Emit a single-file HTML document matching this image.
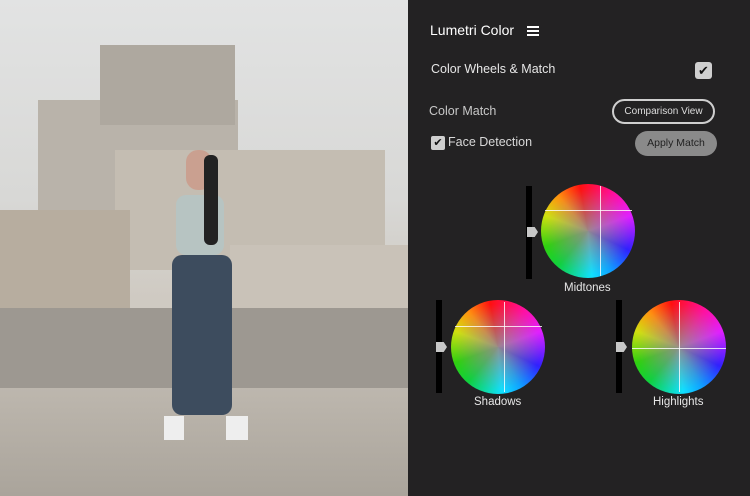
<!DOCTYPE html>
<html><head><style>
*{margin:0;padding:0;box-sizing:border-box}
body{width:750px;height:496px;overflow:hidden;background:#232223;font-family:"Liberation Sans",sans-serif;position:relative}
.a{position:absolute}
.photo{left:0;top:0;width:408px;height:496px;background:linear-gradient(#e2e3e3 0,#d8d8d6 40%,#cfcac2 60%);overflow:hidden}
.t{color:#e6e6e6;position:absolute;white-space:nowrap}
.wheel{position:absolute;width:94px;height:94px;border-radius:50%;background:radial-gradient(circle,rgba(150,140,140,.95) 0,rgba(150,140,140,.5) 30%,rgba(150,140,140,0) 65%),conic-gradient(from -10deg,#ff1010,#ff10a0 45deg,#e020ff 80deg,#3020ff 125deg,#10a0ff 160deg,#10e0ff 185deg,#10d040 230deg,#30d010 260deg,#d0e010 300deg,#ff9010 330deg,#ff1010)}
.bar{position:absolute;width:6px;height:93px;background:#000}
.knob{position:absolute;width:11px;height:10px;background:#c8c8c8;clip-path:polygon(0 0,70% 0,100% 50%,70% 100%,0 100%)}
.hl{position:absolute;height:1px;background:rgba(255,255,255,.8)}
.vl{position:absolute;width:1px;background:rgba(255,255,255,.8)}
</style></head><body>
<div class="a photo">
 <div class="a" style="left:38px;top:100px;width:200px;height:160px;background:#b9b3aa"></div>
 <div class="a" style="left:100px;top:45px;width:135px;height:80px;background:#aea89f"></div>
 <div class="a" style="left:115px;top:150px;width:270px;height:120px;background:#c4bdb2"></div>
 <div class="a" style="left:0;top:210px;width:130px;height:100px;background:#b7ad9f"></div>
 <div class="a" style="left:230px;top:245px;width:178px;height:80px;background:#c9c2b8"></div>
 <div class="a" style="left:0;top:308px;width:408px;height:82px;background:#9d9891"></div>
 <div class="a" style="left:0;top:388px;width:408px;height:108px;background:linear-gradient(#bdb7ae,#aaa49b)"></div>
 <div class="a" style="left:176px;top:195px;width:48px;height:60px;background:#b7c4c2;border-radius:10px"></div>
 <div class="a" style="left:186px;top:150px;width:26px;height:40px;background:#caa090;border-radius:12px"></div>
 <div class="a" style="left:204px;top:155px;width:14px;height:90px;background:#222;border-radius:6px"></div>
 <div class="a" style="left:172px;top:255px;width:60px;height:160px;background:#3d4c5e;border-radius:10px"></div>
 <div class="a" style="left:164px;top:416px;width:20px;height:24px;background:#eee"></div>
 <div class="a" style="left:226px;top:416px;width:22px;height:24px;background:#eee"></div>
</div>
<div class="t" style="left:430px;top:22px;font-size:14px;color:#fff">Lumetri Color</div>
<div class="a" style="left:527px;top:26px;width:12px;height:2px;background:#fff;box-shadow:0 4px 0 #fff,0 8px 0 #fff"></div>
<div class="t" style="left:431px;top:62px;font-size:12.5px">Color Wheels &amp; Match</div>
<div class="a" style="left:695px;top:62px;width:17px;height:17px;background:#cfcfcf;border-radius:3px;color:#111;font-size:13px;text-align:center;line-height:17px">✔</div>
<div class="t" style="left:429px;top:104px;font-size:12.5px;color:#c8c8c8">Color Match</div>
<div class="a" style="left:612px;top:99px;width:103px;height:25px;border:2px solid #cfcfcf;border-radius:13px;color:#ddd;font-size:10px;text-align:center;line-height:21px">Comparison View</div>
<div class="a" style="left:431px;top:136px;width:14px;height:14px;background:#cfcfcf;border-radius:2px;color:#111;font-size:11px;text-align:center;line-height:14px">✔</div>
<div class="t" style="left:448px;top:135px;font-size:12.5px;color:#d8d8d8">Face Detection</div>
<div class="a" style="left:635px;top:131px;width:82px;height:25px;background:#8a8a8a;border-radius:13px;color:#222;font-size:10.5px;text-align:center;line-height:25px">Apply Match</div>

<div class="bar" style="left:526px;top:186px"></div><div class="knob" style="left:527px;top:227px"></div>
<div class="wheel" style="left:541px;top:184px"></div>
<div class="hl" style="left:545px;top:210px;width:87px"></div><div class="vl" style="left:600px;top:186px;height:90px"></div>
<div class="t" style="left:564px;top:282px;font-size:11.5px">Midtones</div>

<div class="bar" style="left:436px;top:300px"></div><div class="knob" style="left:436px;top:342px"></div>
<div class="wheel" style="left:451px;top:300px"></div>
<div class="hl" style="left:455px;top:326px;width:87px"></div><div class="vl" style="left:504px;top:302px;height:90px"></div>
<div class="t" style="left:474px;top:396px;font-size:11.5px">Shadows</div>

<div class="bar" style="left:616px;top:300px"></div><div class="knob" style="left:616px;top:342px"></div>
<div class="wheel" style="left:632px;top:300px"></div>
<div class="hl" style="left:632px;top:348px;width:94px"></div><div class="vl" style="left:679px;top:302px;height:90px"></div>
<div class="t" style="left:653px;top:396px;font-size:11.5px">Highlights</div>
</body></html>
